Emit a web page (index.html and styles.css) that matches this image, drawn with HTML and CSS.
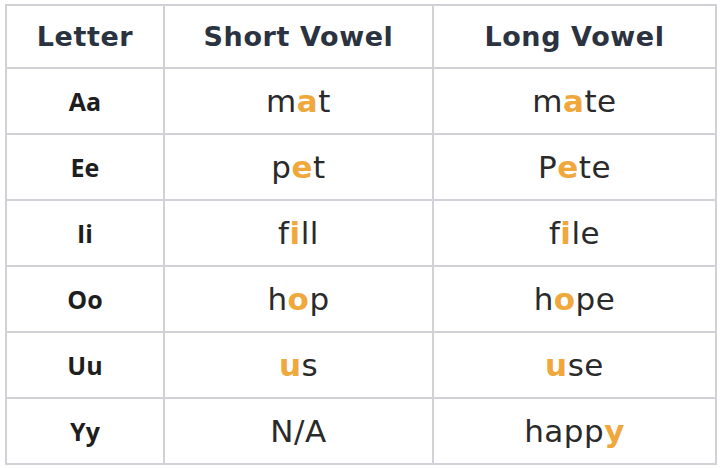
FILE: index.html
```html
<!DOCTYPE html>
<html>
<head>
<meta charset="utf-8">
<link rel="stylesheet" href="styles.css">
</head>
<body>
<table class="vowels">
  <colgroup><col class="c1"><col class="c2"><col class="c3"></colgroup>
  <thead>
    <tr><th>Letter</th><th>Short Vowel</th><th>Long Vowel</th></tr>
  </thead>
  <tbody>
    <tr><td class="let">Aa</td><td class="word">m<span class="v">a</span>t</td><td class="word">m<span class="v">a</span>te</td></tr>
    <tr><td class="let">Ee</td><td class="word">p<span class="v">e</span>t</td><td class="word">P<span class="v">e</span>te</td></tr>
    <tr><td class="let">Ii</td><td class="word">f<span class="v">i</span>ll</td><td class="word">f<span class="v">i</span>le</td></tr>
    <tr><td class="let">Oo</td><td class="word">h<span class="v">o</span>p</td><td class="word">h<span class="v">o</span>pe</td></tr>
    <tr><td class="let">Uu</td><td class="word"><span class="v">u</span>s</td><td class="word"><span class="v">u</span>se</td></tr>
    <tr><td class="let">Yy</td><td class="word">N/A</td><td class="word">happ<span class="v">y</span></td></tr>
  </tbody>
</table>
</body>
</html>
```
FILE: styles.css
```css
html, body {
  margin: 0;
  background: #ffffff;
}
body {
  padding: 4px 5px 5px 5px;
}
.vowels {
  width: 710px;
  border-collapse: collapse;
  table-layout: fixed;
}
.c1 { width: 158px; }
.c2 { width: 269px; }
.c3 { width: 283px; }
.vowels th, .vowels td {
  border: 2px solid #d0d2d7;
  text-align: center;
  vertical-align: middle;
  padding: 0;
}
.vowels th {
  height: 61px;
  font-family: "DejaVu Sans", sans-serif;
  font-weight: 700;
  font-size: 27px;
  color: #2b3240;
  letter-spacing: 0.6px;
}
.vowels td {
  height: 64px;
}
.let {
  font-family: "Open Sans", sans-serif;
  font-weight: 700;
  font-size: 25px;
  color: #1e1e1e;
}
.word {
  font-family: "DejaVu Sans", sans-serif;
  font-weight: 400;
  font-size: 31px;
  color: #2a2a2a;
  letter-spacing: 0.5px;
}
.v {
  color: #f0a83c;
  font-weight: 700;
}
```
